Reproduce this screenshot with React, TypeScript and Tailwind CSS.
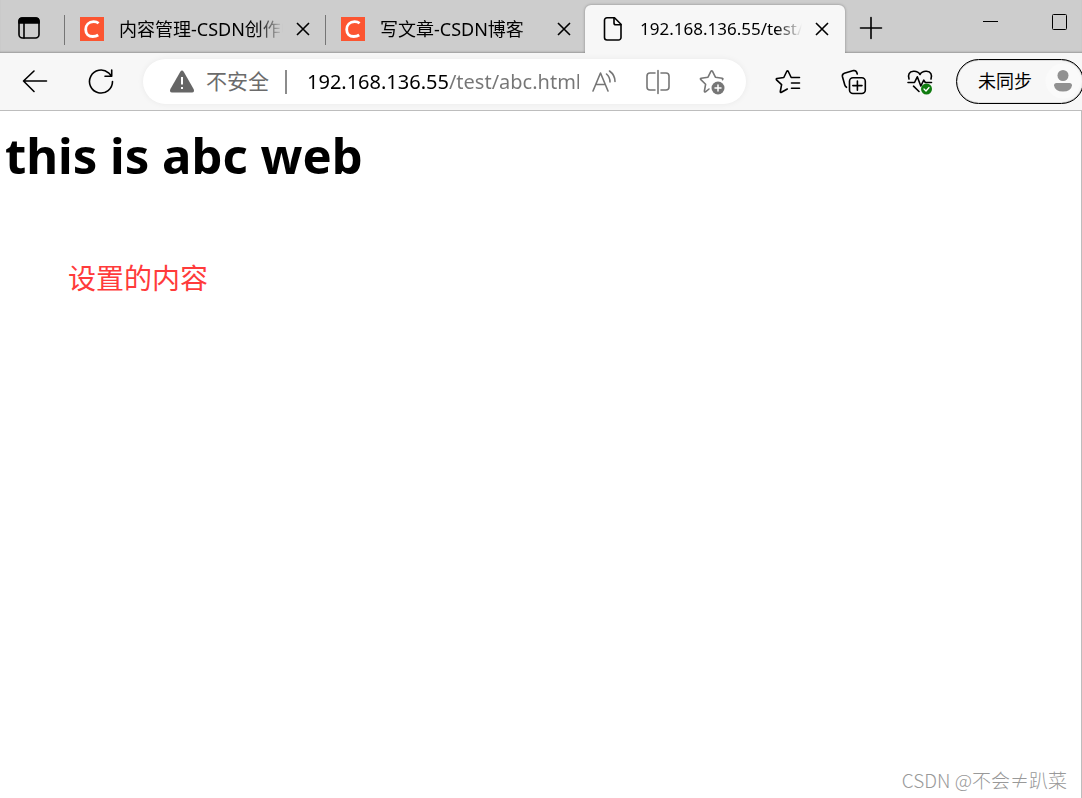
import React, { useState } from 'react';

interface IconProps {
  className?: string;
  children: React.ReactNode;
}

function Icon({ className = '', children }: IconProps) {
  return (
    <svg
      viewBox="0 0 26 26"
      fill="none"
      stroke="currentColor"
      strokeWidth="1.6"
      strokeLinecap="round"
      strokeLinejoin="round"
      aria-hidden="true"
      className={`size-[26px] shrink-0 ${className}`}
    >
      {children}
    </svg>
  );
}

function CsdnLogo() {
  return (
    <svg viewBox="0 0 24 24" className="size-6 shrink-0" aria-hidden="true">
      <rect width="24" height="24" fill="#fc5531" />
      <path
        d="M18.6 6.2C17.2 5 15.5 4.6 13.6 4.6C8.800 4.600 5.700 8 5.700 12.600C5.700 17 8.500 19.500 12.700 19.500C15 19.500 16.700 19 18.200 18"
        fill="none"
        stroke="#fff"
        strokeWidth="2.8"
      />
    </svg>
  );
}

function PageIcon() {
  return (
    <Icon>
      <path d="M7 1.800H14.500L21 8.300V21.500A2.500 2.500 0 0 1 18.500 24H7A2.500 2.500 0 0 1 4.500 21.500V4.300A2.500 2.500 0 0 1 7 1.800Z" />
      <path d="M14 2V7A1.800 1.800 0 0 0 15.800 8.800H21" />
    </Icon>
  );
}

interface TabProps {
  title: string;
  icon: React.ReactNode;
  active?: boolean;
  onSelect: () => void;
}

function Tab({ title, icon, active, onSelect }: TabProps) {
  return (
    <div
      className={
        active
          ? '-ml-px flex h-12 w-[260px] items-center rounded-t-md bg-[#f7f7f7] px-[15px] text-[17px] shadow-[0_0_3px_rgba(0,0,0,0.35)]'
          : 'flex h-12 w-[260px] items-center px-[14px] text-lg'
      }
    >
      <button
        type="button"
        role="tab"
        aria-selected={active}
        onClick={onSelect}
        className="flex min-w-0 flex-1 items-center gap-[14px] text-left"
      >
        <span className="flex w-[26px] shrink-0 justify-center">{icon}</span>
        <span className="flex-1 overflow-hidden whitespace-nowrap [mask-image:linear-gradient(to_right,#000_84%,transparent)]">
          {title}
        </span>
      </button>
      <button type="button" aria-label="关闭标签页" className="ml-3 shrink-0">
        <svg viewBox="0 0 16 16" className="size-4" stroke="currentColor" strokeWidth="1.6" aria-hidden="true">
          <path d="M2 2L14 14M14 2L2 14" />
        </svg>
      </button>
    </div>
  );
}

const tabs = [
  { title: '内容管理-CSDN创作中心', icon: <CsdnLogo /> },
  { title: '写文章-CSDN博客', icon: <CsdnLogo /> },
  { title: '192.168.136.55/test/abc.html', icon: <PageIcon /> },
];

function TabStrip() {
  const [current, setCurrent] = useState(2);

  return (
    <header className="flex h-[53px] items-end overflow-hidden bg-[#cdcdcd] shadow-[inset_0_-2px_2px_-1px_rgba(0,0,0,0.25)]">
      <button type="button" aria-label="标签页操作菜单" className="mb-3 ml-4 shrink-0">
        <Icon>
          <rect x="3" y="3" width="20" height="20" rx="3.500" />
          <path d="M3 8V6A3 3 0 0 1 6 3H20A3 3 0 0 1 23 6V8Z" fill="currentColor" />
          <path d="M8 8V23" />
        </Icon>
      </button>
      <div role="tablist" className="ml-[22px] flex shrink-0 items-end">
        {tabs.map((tab, i) => (
          <React.Fragment key={tab.title}>
            {i !== current && <span className="mb-2 h-[30px] w-px bg-[#757575]" />}
            <Tab title={tab.title} icon={tab.icon} active={i === current} onSelect={() => setCurrent(i)} />
          </React.Fragment>
        ))}
      </div>
      <button type="button" aria-label="新建标签页" className="mb-3 ml-[13px] shrink-0">
        <Icon>
          <path d="M13 2.500V23.500M2.500 13H23.500" />
        </Icon>
      </button>
      <div className="mr-3 mb-[18px] ml-auto flex shrink-0 gap-[50px]">
        <button type="button" aria-label="最小化">
          <svg viewBox="0 0 20 26" className="h-[26px] w-5" stroke="currentColor" aria-hidden="true">
            <path d="M3 12.500H18" />
          </svg>
        </button>
        <button type="button" aria-label="最大化">
          <svg viewBox="0 0 20 26" className="h-[26px] w-5" fill="none" stroke="currentColor" aria-hidden="true">
            <rect x="2.500" y="5.500" width="14" height="15" rx="1" />
          </svg>
        </button>
      </div>
    </header>
  );
}

function Toolbar() {
  const [url, setUrl] = useState('192.168.136.55/test/abc.html');

  return (
    <nav className="flex h-[58px] items-center overflow-hidden border-b border-[#bdbdbd] bg-[#f7f7f7] pl-[22px]">
      <button type="button" aria-label="返回" className="shrink-0">
        <Icon>
          <path d="M1.500 12H24.500M12 2L1.500 12L12 22.500" />
        </Icon>
      </button>
      <button type="button" aria-label="刷新" className="ml-10 shrink-0">
        <Icon>
          <path d="M24.500 12.500A11.500 11.500 0 1 1 20.500 3.800L23.500 7M23.700 1V7.300H17" />
        </Icon>
      </button>

      <form
        onSubmit={(e) => e.preventDefault()}
        className="ml-[29px] flex h-[45px] min-w-0 flex-1 items-center rounded-full bg-white pr-[21px] pl-[26px] shadow-[0_0_6px_rgba(0,0,0,0.06)]"
      >
        <button type="button" className="flex shrink-0 items-center gap-[11px] text-[21px] text-[#6b6b6b]">
          <svg viewBox="0 0 26 26" className="size-[26px]" aria-hidden="true">
            <path
              d="M11.300 2.800Q13 0 14.700 2.800L24.600 20Q26 23.300 23 23.500H3Q0 23.300 1.400 20Z"
              fill="#666"
            />
            <path d="M13 8V15.500M13 18V20" stroke="#fff" strokeWidth="2" />
          </svg>
          不安全
        </button>
        <span className="mx-4 h-6 w-[2px] shrink-0 bg-[#8c8c8c]" />
        <input
          type="text"
          aria-label="地址栏"
          value={url}
          onChange={(e) => setUrl(e.target.value)}
          className="w-0 min-w-0 flex-1 bg-[linear-gradient(to_right,#000_145px,#767676_145px)] bg-clip-text pl-1 text-xl text-transparent caret-black outline-none"
        />
        <div className="ml-3 flex shrink-0 items-center gap-7 text-[#767676]">
          <button type="button" aria-label="大声朗读此页内容">
            <Icon>
              <path d="M2 22L9.500 4L17 22M4.800 15.500H14.200" />
              <path d="M15.500 5Q19 8 19 13M18.500 2Q24 6 24 12.500" />
            </Icon>
          </button>
          <button type="button" aria-label="拆分屏幕">
            <Icon>
              <path d="M13 1.500V24.500M10 4H5A3 3 0 0 0 2 7V18A3 3 0 0 0 5 21H10M16 4H21A3 3 0 0 1 24 7V18A3 3 0 0 1 21 21H16" />
            </Icon>
          </button>
          <button type="button" aria-label="将此页添加到收藏夹">
            <Icon>
              <path d="M10 20L6.500 22.800Q5.300 23.300 5.400 22L6.600 15.300L1.600 10.400Q1 9.400 2.200 9.200L9 8.200L12 2.200Q12.700 1.200 13.400 2.200L16.400 8.200L23.200 9.200Q24.500 9.600 23.500 10.600" />
              <circle cx="19" cy="19" r="6.500" fill="currentColor" stroke="none" />
              <path d="M19 16V22M16 19H22" stroke="#fff" strokeWidth="1.500" />
            </Icon>
          </button>
        </div>
      </form>

      <div className="ml-[29px] flex shrink-0 items-center gap-10">
        <button type="button" aria-label="收藏夹">
          <Icon>
            <path d="M12.300 20L6.500 23.300Q5.200 23.800 5.300 22.500L6.600 15.600L1.500 10.800Q.8 9.800 2 9.500L8.800 8.500L11.700 2.500Q12.500 1.200 13.300 2.500L16.200 8.500H24.500M16.500 14H24.500M16.500 19.300H24.500" />
          </Icon>
        </button>
        <button type="button" aria-label="集锦">
          <Icon>
            <path d="M5.500 18.300Q4.200 17.500 3.800 16L1.400 7.500Q1 5 3.300 4.200L12.500 1.600Q15.500 1.200 16.300 5" />
            <rect x="8.500" y="8.700" width="15.800" height="15.800" rx="3.500" />
            <path d="M16.400 12V21.200M11.800 16.600H21" />
          </Icon>
        </button>
        <button type="button" aria-label="浏览器概要">
          <Icon>
            <path d="M2 10Q0 3 6.500 2.300Q11 2 13 5.500Q15 2 19.500 2.300Q26 3 24 10" />
            <path d="M1 13.500H7.500L10.300 7.800L13.800 17L16.800 11.200L18.300 13.500H24.500M6.500 17.200L12 22.500" />
            <circle cx="19.500" cy="20" r="5.500" fill="#107c10" stroke="none" />
            <path d="M17 20L19 22L22 18.500" stroke="#fff" strokeWidth="1.300" />
          </Icon>
        </button>
      </div>

      <button
        type="button"
        className="-mr-[2px] ml-[23px] flex h-[45px] w-32 shrink-0 items-center justify-between rounded-full border border-black pr-[2px] pb-[2px] pl-[21px] text-lg shadow-[inset_0_0_1px_#000]"
      >
        未同步
        <svg viewBox="0 0 36 36" className="size-9" aria-hidden="true">
          <circle cx="18" cy="18" r="17.500" fill="#fafafa" />
          <circle cx="18" cy="12.500" r="5.500" fill="#919191" />
          <path d="M11.500 20H24.500Q27 20 27 22.500Q26 28.500 18 28.500Q10 28.500 9 22.500Q9 20 11.500 20Z" fill="#919191" />
        </svg>
      </button>
    </nav>
  );
}

function App() {
  return (
    <div className="flex min-h-screen flex-col overflow-hidden bg-white font-['Noto_Sans','Noto_Sans_CJK_SC',sans-serif] text-black">
      <TabStrip />
      <Toolbar />
      <main className="flex flex-1 flex-col border-r border-[#bdbdbd]">
        <h1 className="mt-[9px] ml-[5px] text-[49px] leading-[70px] font-bold">this is abc web</h1>
        <p className="mt-[68px] ml-[68px] text-[28px] leading-10 text-[#ff3b3b]">设置的内容</p>
        <footer className="mt-auto mr-[14px] mb-1 self-end font-['Noto_Sans_CJK_SC',sans-serif] text-[19px] leading-7 font-light text-[#999]">
          CSDN @不会≠趴菜
        </footer>
      </main>
    </div>
  );
}

export default App;
